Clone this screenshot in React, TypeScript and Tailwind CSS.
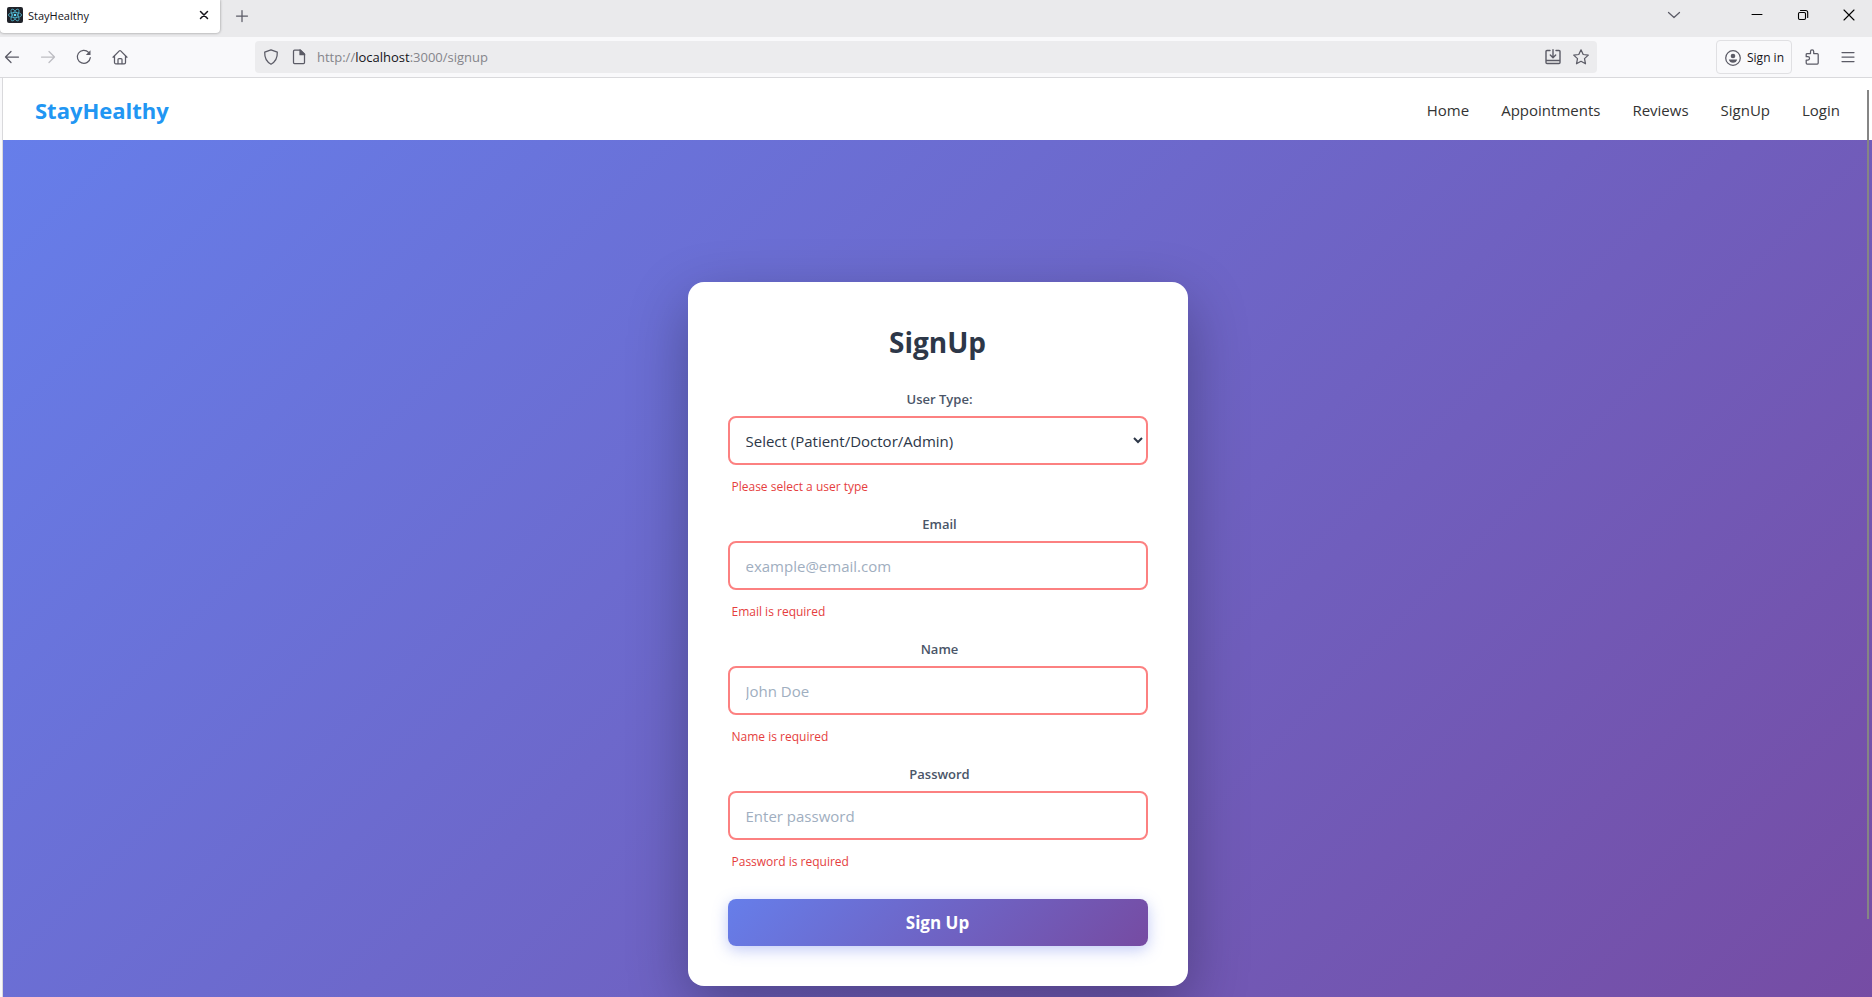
import React from "react";

const fields = [
  { id: "email", label: "Email", type: "email", placeholder: "example@email.com", error: "Email is required" },
  { id: "name", label: "Name", type: "text", placeholder: "John Doe", error: "Name is required" },
  { id: "password", label: "Password", type: "password", placeholder: "Enter password", error: "Password is required" },
];

const links = ["Home", "Appointments", "Reviews", "SignUp", "Login"];

function Icon({ children, className = "text-[#5b5b66]" }: { children: React.ReactNode; className?: string }) {
  return (
    <svg
      width="16"
      height="16"
      viewBox="0 0 16 16"
      fill="none"
      stroke="currentColor"
      strokeWidth="1.25"
      strokeLinecap="round"
      strokeLinejoin="round"
      className={className}
      aria-hidden="true"
    >
      {children}
    </svg>
  );
}

function TabStrip() {
  return (
    <div className="flex h-[37px] shrink-0 items-start bg-[#eaeaec]">
      <div className="flex h-[33px] w-[220px] items-center rounded-b bg-white pr-2 pl-[7px] shadow-[0_0_3px_rgba(0,0,0,0.4)]">
        <svg width="16" height="16" viewBox="0 0 16 16" className="-mt-1" aria-hidden="true">
          <rect width="16" height="16" rx="2" fill="#20232a" />
          <g fill="none" stroke="#4fb3cc" strokeWidth="0.8">
            <ellipse cx="8" cy="8" rx="6.6" ry="2.6" />
            <ellipse cx="8" cy="8" rx="6.6" ry="2.6" transform="rotate(60 8 8)" />
            <ellipse cx="8" cy="8" rx="6.6" ry="2.6" transform="rotate(120 8 8)" />
          </g>
          <circle cx="8" cy="8" r="1.3" fill="#61dafb" />
        </svg>
        <span className="ml-[5px] flex-1 pb-px text-[11px] text-[#15141a]">StayHealthy</span>
        <button aria-label="Close tab" className="mb-1 flex h-4 w-4 items-center justify-center">
          <Icon className="text-[#15141a]">
            <path d="M4.5 4.5l7 7M11.5 4.5l-7 7" strokeWidth="1.5" />
          </Icon>
        </button>
      </div>
      <button aria-label="New tab" className="ml-[14px] flex h-8 w-4 items-center">
        <Icon>
          <path d="M8 2.5v11M2.5 8h11" />
        </Icon>
      </button>
      <div className="ml-auto flex h-[30px] items-center pr-[15px]">
        <button aria-label="List all tabs" className="mr-[67px]">
          <Icon>
            <path d="M2.5 5.5L8 10.5l5.5-5" />
          </Icon>
        </button>
        <button aria-label="Minimize" className="mr-[30px]">
          <Icon className="text-black">
            <path d="M3 7.5h10" strokeWidth="1" />
          </Icon>
        </button>
        <button aria-label="Restore" className="mr-[30px]">
          <Icon className="text-black">
            <rect x="3.5" y="5.5" width="7" height="7" rx="1.2" strokeWidth="1.1" />
            <path d="M5.500 3.500h5.200a2 2 0 0 1 2 2v5" strokeWidth="1.1" />
          </Icon>
        </button>
        <button aria-label="Close">
          <Icon className="text-black">
            <path d="M3 3l10 10M13 3L3 13" strokeWidth="1.1" />
          </Icon>
        </button>
      </div>
    </div>
  );
}

function Toolbar() {
  return (
    <div className="flex h-[41px] shrink-0 items-center border-b border-[#d9d9dc] bg-[#f9f9fb]">
      <div className="flex items-center gap-5 pl-1">
        <button aria-label="Back">
          <Icon>
            <path d="M14.5 8H1.5M7 2.5L1.5 8L7 13.5" />
          </Icon>
        </button>
        <button aria-label="Forward" disabled>
          <Icon className="text-[#bdbdc2]">
            <path d="M1.5 8h13M9 2.5L14.5 8L9 13.5" />
          </Icon>
        </button>
        <button aria-label="Reload">
          <Icon>
            <path d="M14.300 8.600A6.500 6.500 0 1 1 12.600 3.400" />
            <path d="M14.500 1.200v4.800H9.800z" fill="currentColor" stroke="none" />
          </Icon>
        </button>
        <button aria-label="Home page">
          <Icon>
            <path d="M1 8.200L7.300 1.900a1 1 0 0 1 1.400 0L15 8.200M2.500 7v6.500a1.300 1.300 0 0 0 1.300 1.300h8.400a1.300 1.300 0 0 0 1.300-1.300V7" />
            <path d="M6 14.500V10.500a1 1 0 0 1 1-1h2a1 1 0 0 1 1 1v4" />
          </Icon>
        </button>
      </div>
      <div className="ml-[127px] flex h-8 w-[1342px] items-center rounded bg-[#ececee] px-2">
        <Icon>
          <path d="M8 0.800l6.300 2.300c.2 5.200-1.300 9.600-6.300 12.100C3 12.700 1.500 8.300 1.700 3.100z" />
        </Icon>
        <Icon className="ml-3 text-[#5b5b66]">
          <path d="M3.500 1.200h6L13.500 5v8.600a1 1 0 0 1-1 1h-9a1 1 0 0 1-1-1V2.200a1 1 0 0 1 1-1z" />
          <path d="M9 1v4.700h4.700z" fill="currentColor" />
        </Icon>
        <div
          role="textbox"
          aria-label="Address"
          tabIndex={0}
          className="ml-[10px] flex-1 pt-0.5 text-[13px] text-[#85858b]"
        >
          http://<span className="text-[#15141a]">localhost</span>:3000/signup
        </div>
        <button aria-label="Install page" className="mr-3">
          <Icon>
            <path
              d="M5 1.500H2a1 1 0 0 0-1 1v11a1 1 0 0 0 1 1h12a1 1 0 0 0 1-1v-11a1 1 0 0 0-1-1h-3M1 11.500h14M8 0.800v7.500M5.300 6L8 8.700L10.700 6"
              strokeWidth="1.4"
            />
          </Icon>
        </button>
        <button aria-label="Bookmark page">
          <Icon>
            <path d="M8 0.800l2.200 4.700 5.100.6-3.800 3.500 1 5.200L8 12.300l-4.500 2.500 1-5.200L.700 6.100l5.100-.6z" />
          </Icon>
        </button>
      </div>
      <div className="ml-auto flex items-center pr-4">
        <button className="mr-3 flex h-[34px] w-[76px] items-center gap-[6px] rounded border border-[#e0e0e3] pt-px pl-2 text-xs whitespace-nowrap text-[#15141a]">
          <Icon className="shrink-0 text-[#5b5b66]">
            <circle cx="8" cy="8" r="7.3" />
            <circle cx="8" cy="6" r="2.3" fill="currentColor" stroke="none" />
            <path d="M3.800 9.500h8.400c-.5 2-2 3.300-4.200 3.300s-3.700-1.300-4.200-3.300z" fill="currentColor" stroke="none" />
          </Icon>
          Sign in
        </button>
        <button aria-label="Extensions" className="mr-5">
          <Icon>
            <path d="M6.500 4.500V2.500a1.600 1.600 0 0 1 3.200 0v2h3.500a1 1 0 0 1 1 1V14a1 1 0 0 1-1 1H3.200a1 1 0 0 1-1-1v-3h1.700a1.600 1.600 0 0 0 0-3.300H2.200V5.500a1 1 0 0 1 1-1z" />
          </Icon>
        </button>
        <button aria-label="Menu">
          <Icon>
            <path d="M2 3.500h12M2 8h12M2 12.500h12" />
          </Icon>
        </button>
      </div>
    </div>
  );
}

const labelClass = "ml-1 block text-center text-[13px] leading-5 font-semibold text-[#4a5568]";
const controlClass =
  "mt-[7px] block h-[49px] w-full rounded-lg border-2 border-[#fc8181] bg-white text-[15px] text-[#2d3748] outline-none placeholder:text-[#a0aec0]";
const errorClass = "mt-3 ml-1 text-xs leading-5 text-[#e53e3e]";

export default function App() {
  return (
    <div className="flex h-screen flex-col overflow-hidden bg-[#f9f9fb] font-['Open_Sans','Noto_Sans',sans-serif]">
      <TabStrip />
      <Toolbar />
      <div className="relative ml-0.5 min-h-0 flex-1 overflow-hidden border-l border-[#d9d9dc]">
        <header className="flex h-[62px] items-center justify-between bg-white px-8 pt-0.5">
          <a href="#home" className="text-[22px] font-bold text-[#2196f3]">
            StayHealthy
          </a>
          <nav className="flex gap-8 text-[15px] text-[#333333]">
            {links.map((link) => (
              <a key={link} href={"#" + link.toLowerCase()}>
                {link}
              </a>
            ))}
          </nav>
        </header>
        <main className="flex min-h-[930px] items-start justify-center bg-[linear-gradient(135deg,#667eea_0%,#764ba2_100%)] pt-[142px]">
          <form
            noValidate
            className="w-[500px] rounded-2xl bg-white px-10 pt-10 pb-10 shadow-[0_20px_60px_rgba(0,0,0,0.3)]"
          >
            <h1 className="text-center text-[28px] leading-10 font-bold text-[#2d3748]">SignUp</h1>
            <div className="mt-[27px] h-[125px]">
              <label htmlFor="role" className={labelClass}>
                User Type:
              </label>
              <select id="role" className={controlClass + " px-3"}>
                <option>Select (Patient/Doctor/Admin)</option>
                <option>Patient</option>
                <option>Doctor</option>
                <option>Admin</option>
              </select>
              <p className={errorClass}>Please select a user type</p>
            </div>
            {fields.map((field) => (
              <div key={field.id} className="h-[125px]">
                <label htmlFor={field.id} className={labelClass}>
                  {field.label}
                </label>
                <input
                  id={field.id}
                  type={field.type}
                  placeholder={field.placeholder}
                  className={controlClass + " px-4"}
                />
                <p className={errorClass}>{field.error}</p>
              </div>
            ))}
            <button
              type="button"
              className="mt-[10px] block h-[47px] w-full rounded-lg bg-[linear-gradient(135deg,#667eea_0%,#764ba2_100%)] text-[17px] font-bold text-white shadow-[0_4px_15px_rgba(102,126,234,0.4)]"
            >
              Sign Up
            </button>
          </form>
        </main>
        <div className="absolute top-3 right-[3px] h-[829px] w-[2px] bg-[#858585]" />
      </div>
    </div>
  );
}
